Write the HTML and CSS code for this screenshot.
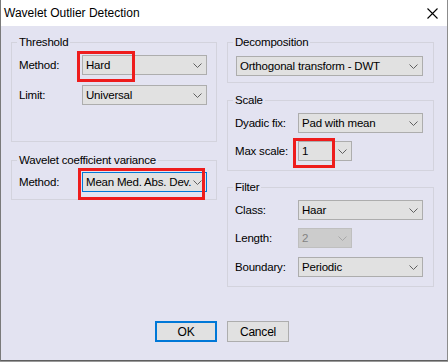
FILE: index.html
```html
<!DOCTYPE html>
<html lang="en">
<head>
  <meta charset="UTF-8">
  <title>Wavelet Outlier Detection</title>
  <link rel="stylesheet" href="styles.css">
</head>
<body>
  <div class="window">
    <div class="titlebar">
      <span class="title">Wavelet Outlier Detection</span>
      <svg class="close" width="11" height="11" viewBox="0 0 11 11">
        <path d="M0.5 0.5 L10.5 10.5 M10.5 0.5 L0.5 10.5" stroke="#000" stroke-width="1.1" fill="none"/>
      </svg>
    </div>

    <div class="client">
      <div class="columns">
        <div class="column col-left">
          <fieldset class="group threshold">
            <legend>Threshold</legend>
            <div class="row">
              <label>Method:</label>
              <div class="combo">
                <span class="value">Hard</span>
                <svg class="chev" width="9" height="5" viewBox="0 0 9 5"><path d="M0.5 0.5 L4.5 4.5 L8.5 0.5" stroke="#606060" fill="none"/></svg>
                <span class="mark mark-hard"></span>
              </div>
            </div>
            <div class="row gap10">
              <label>Limit:</label>
              <div class="combo">
                <span class="value">Universal</span>
                <svg class="chev" width="9" height="5" viewBox="0 0 9 5"><path d="M0.5 0.5 L4.5 4.5 L8.5 0.5" stroke="#606060" fill="none"/></svg>
              </div>
            </div>
          </fieldset>

          <fieldset class="group variance">
            <legend>Wavelet coefficient variance</legend>
            <div class="row">
              <label>Method:</label>
              <div class="combo focused">
                <span class="value">Mean Med. Abs. Dev.</span>
                <svg class="chev" width="9" height="5" viewBox="0 0 9 5"><path d="M0.5 0.5 L4.5 4.5 L8.5 0.5" stroke="#606060" fill="none"/></svg>
                <span class="mark mark-var"></span>
              </div>
            </div>
          </fieldset>
        </div>

        <div class="column col-right">
          <fieldset class="group decomposition">
            <legend>Decomposition</legend>
            <div class="row">
              <div class="combo wide">
                <span class="value">Orthogonal transform - DWT</span>
                <svg class="chev" width="9" height="5" viewBox="0 0 9 5"><path d="M0.5 0.5 L4.5 4.5 L8.5 0.5" stroke="#606060" fill="none"/></svg>
              </div>
            </div>
          </fieldset>

          <fieldset class="group scale">
            <legend>Scale</legend>
            <div class="row">
              <label>Dyadic fix:</label>
              <div class="combo">
                <span class="value">Pad with mean</span>
                <svg class="chev" width="9" height="5" viewBox="0 0 9 5"><path d="M0.5 0.5 L4.5 4.5 L8.5 0.5" stroke="#606060" fill="none"/></svg>
              </div>
            </div>
            <div class="row gap8">
              <label>Max scale:</label>
              <div class="combo short">
                <span class="value">1</span>
                <svg class="chev" width="9" height="5" viewBox="0 0 9 5"><path d="M0.5 0.5 L4.5 4.5 L8.5 0.5" stroke="#606060" fill="none"/></svg>
                <span class="mark mark-scale"></span>
              </div>
            </div>
          </fieldset>

          <fieldset class="group filter">
            <legend>Filter</legend>
            <div class="row">
              <label>Class:</label>
              <div class="combo">
                <span class="value">Haar</span>
                <svg class="chev" width="9" height="5" viewBox="0 0 9 5"><path d="M0.5 0.5 L4.5 4.5 L8.5 0.5" stroke="#606060" fill="none"/></svg>
              </div>
            </div>
            <div class="row gap8">
              <label>Length:</label>
              <div class="combo short disabled">
                <span class="value">2</span>
                <svg class="chev" width="9" height="5" viewBox="0 0 9 5"><path d="M0.5 0.5 L4.5 4.5 L8.5 0.5" stroke="#a8a8a8" fill="none"/></svg>
              </div>
            </div>
            <div class="row gap9">
              <label>Boundary:</label>
              <div class="combo">
                <span class="value">Periodic</span>
                <svg class="chev" width="9" height="5" viewBox="0 0 9 5"><path d="M0.5 0.5 L4.5 4.5 L8.5 0.5" stroke="#606060" fill="none"/></svg>
              </div>
            </div>
          </fieldset>
        </div>
      </div>

      <div class="buttons">
        <button class="btn btn-default">OK</button>
        <button class="btn">Cancel</button>
      </div>
    </div>
  </div>
</body>
</html>
```

FILE: styles.css
```css
:root {
  --face: #e3e3f1;
  --combo: #e1e1e1;
  --combo-border: #adadad;
  --frame: #d3d3dd;
  --accent: #0078d7;
  --mark: #ee1c1c;
}

html, body {
  margin: 0;
  padding: 0;
  background: #9a9a9a;
}

.window {
  width: 448px;
  height: 361px;
  box-sizing: border-box;
  border-left: 1px solid #7a7a7a;
  border-right: 1px solid #8c8c8c;
  border-bottom: 1px solid #5e5e5e;
  display: flex;
  flex-direction: column;
  font-family: "Liberation Sans", Arial, sans-serif;
  font-size: 12px;
  color: #000;
}

.titlebar {
  height: 26px;
  flex: none;
  background: #fff;
  display: flex;
  align-items: center;
  justify-content: space-between;
  padding: 0 9px 0 3px;
}

.title {
  font-size: 12px;
}

.client {
  flex: 1;
  background: var(--face);
  padding: 8px 0 0 10px;
  font-size: 11.5px;
  letter-spacing: -0.2px;
}

.columns {
  display: flex;
  gap: 10px;
  height: 254px;
}

.col-left {
  width: 206px;
}

.col-right {
  width: 207px;
}

.group {
  margin: 0;
  border: 1px solid var(--frame);
  padding: 5px 8px 9px 7px;
  min-width: 0;
}

.group legend {
  padding: 0 2px;
  margin-left: -2px;
  line-height: 16px;
}

.threshold {
  padding-bottom: 36px;
}

.variance {
  margin-top: 10px;
  padding-top: 4px;
  padding-bottom: 7px;
}

.decomposition {
  padding-top: 6px;
  padding-bottom: 6px;
}

.scale {
  margin-top: 9px;
}

.filter {
  margin-top: 8px;
}

.row {
  display: flex;
  align-items: center;
  height: 20px;
}

.gap10 { margin-top: 10px; }
.gap8 { margin-top: 8px; }
.gap9 { margin-top: 9px; }

.row label {
  width: 63px;
  flex: none;
}

.combo {
  position: relative;
  width: 125px;
  height: 20px;
  box-sizing: border-box;
  border: 1px solid var(--combo-border);
  background: var(--combo);
  display: flex;
  align-items: center;
  padding-left: 3px;
}

.combo .value {
  flex: 1;
  white-space: nowrap;
}

.combo .chev {
  flex: none;
  margin-right: 4px;
}

.combo.wide {
  width: 187px;
  margin-left: 1px;
}

.combo.short {
  width: 54px;
}

.combo.focused {
  border-color: var(--accent);
}

.combo.disabled {
  background: #cccccc;
  border-color: #bfbfbf;
  color: #838383;
}

/* red annotation boxes drawn over the screenshot */
.mark {
  position: absolute;
  border: 3px solid var(--mark);
  box-sizing: border-box;
  pointer-events: none;
}

.mark-hard {
  left: -6px;
  top: -5px;
  width: 58px;
  height: 31px;
}

.mark-var {
  left: -5px;
  top: -5px;
  width: 127px;
  height: 32px;
}

.mark-scale {
  left: -6px;
  top: -4px;
  width: 42px;
  height: 30px;
}

.buttons {
  display: flex;
  gap: 10px;
  margin-top: 33px;
  padding-left: 144px;
}

.btn {
  width: 62px;
  height: 21px;
  box-sizing: border-box;
  background: var(--combo);
  border: 1px solid var(--combo-border);
  font-family: inherit;
  font-size: 12px;
  letter-spacing: inherit;
  color: #000;
  padding: 0;
}

.btn-default {
  border: 2px solid var(--accent);
}
```
